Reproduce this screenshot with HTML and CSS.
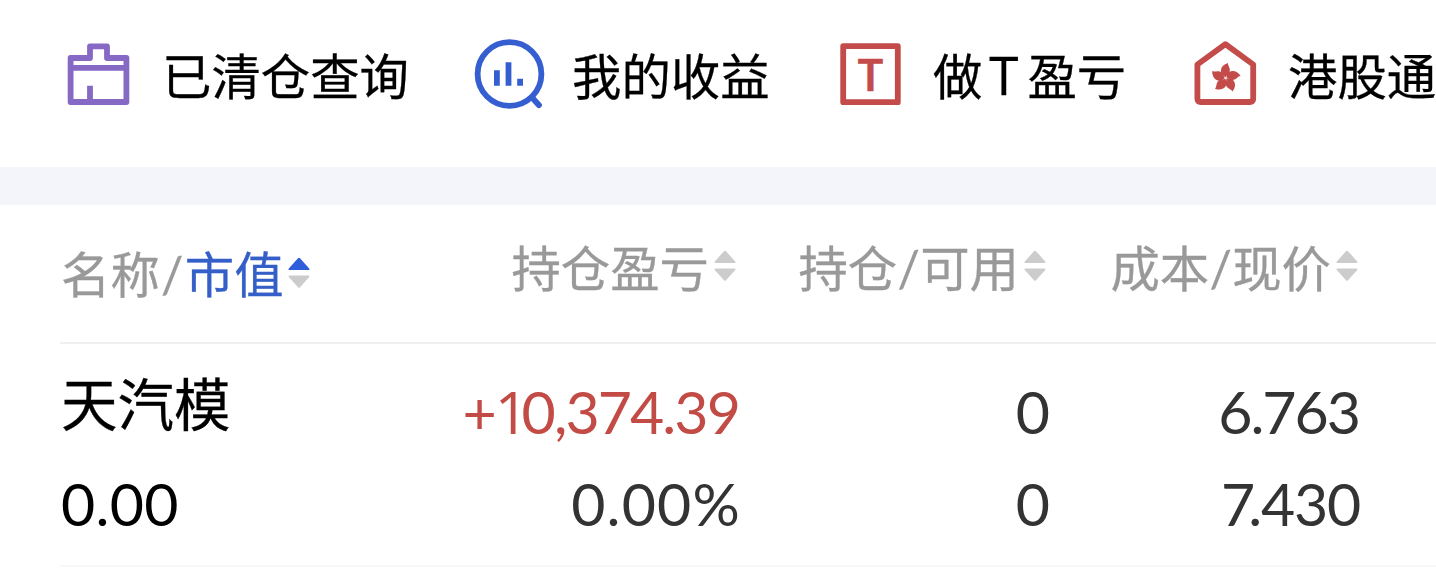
FILE: index.html
```html
<!DOCTYPE html>
<html lang="zh-CN">
<head>
<meta charset="utf-8">
<title>持仓</title>
<link rel="stylesheet" href="styles.css">
</head>
<body>
<svg class="defs" width="0" height="0">
  <symbol id="sort" viewBox="0 0 24 34">
    <path class="up" d="M11 2.2 Q12 1.2 13 2.2 L22 12.2 Q23.2 14 21.5 14 H2.500 Q.8 14 2 12.200 Z"/>
    <path class="down" d="M11 31.300 Q12 32.300 13 31.300 L22 21.300 Q23.200 19.500 21.500 19.500 H2.500 Q.8 19.500 2 21.300 Z"/>
  </symbol>
</svg>
<nav class="tools">
  <a class="tool tool-cleared">
    <svg class="icon" viewBox="60 36 76 76">
      <path class="line purple" d="M90 58V46.400H107V58H126.400V102H70.600V58ZM70.600 67.800H126.400M90 102V85.700"/>
    </svg>
    <span class="label">已清仓查询</span>
  </a>
  <a class="tool tool-income">
    <svg class="icon" viewBox="472 36 76 76">
      <circle class="line blue" cx="509.500" cy="74" r="31.900"/>
      <path class="line blue handle" d="M532.500 98L539 105.200"/>
      <path class="fill-blue" d="M494 70.300h5.800v15.400h-5.800zM505.600 62.300h5.800v23.400h-5.800zM517.200 78.700h5.800v7h-5.800z"/>
    </svg>
    <span class="label">我的收益</span>
  </a>
  <a class="tool tool-t">
    <svg class="icon" viewBox="833 36 76 76">
      <rect class="line red" x="843.200" y="46.200" width="54.600" height="56"/>
      <text class="icon-t" x="870.500" y="91">T</text>
    </svg>
    <span class="label">做<span class="latin">T</span>盈亏</span>
  </a>
  <a class="tool tool-hk">
    <svg class="icon" viewBox="1187 36 76 76">
      <path class="line red" d="M1225.400 44.200L1253.200 64.500V98.500Q1253.200 102 1249.700 102H1200.900Q1197.400 102 1197.400 98.500V64.500Z"/>
      <g class="fill-red" transform="translate(1225.700 78)">
        <path id="petal" d="M-.2 -.8C-7 -3.500 -6.500 -12.500 2.400 -14.900C1.600 -12.500 5.600 -9.500 3.700 -5.300C2.800 -3.400 .8 -2.800 -.2 -.8Z"/>
        <use href="#petal" transform="rotate(72)"/>
        <use href="#petal" transform="rotate(144)"/>
        <use href="#petal" transform="rotate(216)"/>
        <use href="#petal" transform="rotate(288)"/>
      </g>
    </svg>
    <span class="label">港股通</span>
  </a>
</nav>
<div class="band"></div>
<main class="holdings">
  <header class="grid head">
    <div class="th first"><span>名称<i>/</i><b>市值</b></span><svg class="sort asc"><use href="#sort"/></svg></div>
    <div class="th"><span>持仓盈亏</span><svg class="sort"><use href="#sort"/></svg></div>
    <div class="th"><span>持仓<i>/</i>可用</span><svg class="sort"><use href="#sort"/></svg></div>
    <div class="th"><span>成本<i>/</i>现价</span><svg class="sort"><use href="#sort"/></svg></div>
  </header>
  <section class="grid row">
    <div class="cell first"><span class="name">天汽模</span><span class="num">0.00</span></div>
    <div class="cell"><span class="num gain">+<span class="one">1</span>0,374.39</span><span class="num pct">0.00%</span></div>
    <div class="cell"><span class="num">0</span><span class="num">0</span></div>
    <div class="cell"><span class="num cost">6.763</span><span class="num price"><span class="seven">7</span>.430</span></div>
  </section>
</main>
</body>
</html>
```
FILE: styles.css
```css
* { box-sizing: border-box; }
body {
  margin: 0;
  width: 1436px;
  height: 576px;
  overflow: hidden;
  background: #fff;
  color: #000;
  font-family: "Noto Sans CJK SC", sans-serif;
}
.defs { display: block; }
.tools {
  display: flex;
  height: 167px;
  padding: 36px 0 0 60px;
  overflow: hidden;
}
.tool {
  display: flex;
  flex: none;
  gap: 26px;
  height: 80px;
}
.tool-cleared { width: 412px; }
.tool-income { width: 361px; gap: 24px; }
.tool-t { width: 354px; gap: 24px; }
.tool-hk { gap: 25px; }
.icon { flex: none; width: 76px; height: 76px; }
.line { fill: none; stroke-width: 5.8; stroke-linejoin: round; }
.purple { stroke: #8569c5; }
.blue { stroke: #355fd0; }
.red { stroke: #c34b49; }
.handle { stroke-linecap: round; }
.fill-blue { fill: #355fd0; }
.fill-red { fill: #c34b49; }
.icon-t {
  fill: #c34b49;
  stroke: #c34b49;
  stroke-width: 0.7px;
  font: 600 45px "Open Sans", sans-serif;
  text-anchor: middle;
}
.label {
  font-size: 49.4px;
  line-height: 75px;
  white-space: nowrap;
  -webkit-text-stroke: 0.3px currentColor;
}
.latin {
  display: inline-block;
  width: 45px;
  padding-right: 2px;
  text-align: center;
  font-family: "Open Sans", sans-serif;
  font-size: 53px;
  line-height: 60px;
}
.band { height: 38px; background: #f4f5fb; }
.grid {
  display: grid;
  grid-template-columns: 340px 339px 310px 312px;
  margin-left: 60px;
}
.head {
  height: 139px;
  border-bottom: 2px solid #f0f0f0;
  color: #999;
}
.th {
  display: flex;
  justify-content: flex-end;
  gap: 4px;
  padding: 28px 2px 0 0;
  font-size: 49.4px;
  line-height: 66px;
  white-space: nowrap;
  -webkit-text-stroke: 0.3px currentColor;
}
.th.first {
  justify-content: flex-start;
  gap: 3px;
  padding: 34px 0 0 1px;
}
.th i {
  display: inline-block;
  width: 23px;
  text-align: center;
  font-family: Lato, sans-serif;
  font-style: normal;
  line-height: 50px;
}
.first i { width: 25px; }
.th b { font-weight: 400; color: #355fc8; }
.sort { width: 24px; height: 34px; margin-top: 16px; fill: #ccc; -webkit-text-stroke: 0; }
.sort.asc { color: #305ddb; margin-top: 17px; }
.up { fill: currentColor; }
.sort:not(.asc) { color: #ccc; }
.row {
  height: 223px;
  border-bottom: 2px solid #f7f7f7;
}
.cell {
  display: flex;
  flex-direction: column;
  align-items: flex-end;
  padding-top: 22px;
  color: #333;
}
.cell.first { align-items: flex-start; color: #000; }
.num {
  height: 92px;
  font-family: Lato, sans-serif;
  font-size: 59px;
  line-height: 91px;
  margin-right: -1px;
  white-space: nowrap;
}
.first .num { padding-left: 1px; letter-spacing: 0.3px; }
.name {
  height: 92px;
  padding-left: 1px;
  font-size: 56.5px;
  line-height: 70px;
  -webkit-text-stroke: 0.3px currentColor;
}
.gain { color: #c34b45; letter-spacing: -1.9px; margin-right: 0; }
.one { font-family: "Open Sans", sans-serif; line-height: 1; letter-spacing: -7px; }
.pct { letter-spacing: 1.2px; margin-right: -2px; }
.cost { letter-spacing: -2px; margin-right: 2px; }
.price { letter-spacing: -1.2px; margin-right: 1px; }
.seven { letter-spacing: -7px; }
```
